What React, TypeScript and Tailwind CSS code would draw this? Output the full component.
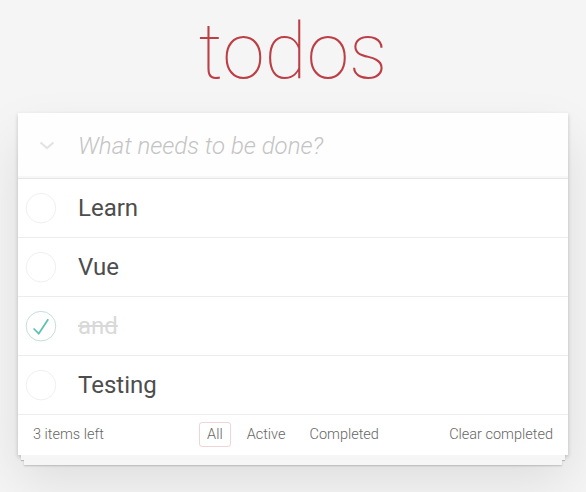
import React from "react";

type Todo = { id: number; title: string; done: boolean };

const todos: Todo[] = [
  { id: 1, title: "Learn", done: false },
  { id: 2, title: "Vue", done: false },
  { id: 3, title: "and", done: true },
  { id: 4, title: "Testing", done: false },
];

function Toggle({ done }: { done: boolean }) {
  return (
    <svg width="40" height="40" viewBox="-10 -18 100 135" className="shrink-0">
      <circle
        cx="50"
        cy="50"
        r="50"
        fill="none"
        stroke={done ? "#bddad5" : "#ededed"}
        strokeWidth="3"
      />
      {done && <path fill="#5dc2af" d="M72 25L42 71 27 56l-4 4 20 20 34-52z" />}
    </svg>
  );
}

export default function App() {
  const left = todos.filter((t) => !t.done).length;

  return (
    <div
      className="min-h-screen bg-[#f5f5f5] text-[#4d4d4d] font-light"
      style={{ fontFamily: "Roboto, 'Liberation Sans', sans-serif" }}
    >
      <div className="mx-auto max-w-[550px]">
        <header className="h-[113px] pt-[14px]">
          <h1 className="text-center text-[77px] leading-none font-thin text-[#bc3f46]">
            todos
          </h1>
        </header>

        <section className="bg-white shadow-[0_2px_4px_0_rgba(0,0,0,0.2),0_25px_50px_0_rgba(0,0,0,0.1)]">
          <div className="flex h-[65px] items-center bg-[rgba(0,0,0,0.003)] shadow-[inset_0_-2px_1px_rgba(0,0,0,0.03)]">
            <div className="flex w-[60px] justify-center pr-[2px]">
              <svg width="16" height="9" viewBox="0 0 16 9">
                <polyline
                  points="1.5,1.5 8,7 14.5,1.5"
                  fill="none"
                  stroke="#e3e3e3"
                  strokeWidth="2.2"
                />
              </svg>
            </div>
            <input
              className="flex-1 bg-transparent pr-4 text-[24px] outline-none placeholder:italic placeholder:text-[#c4c4c4]"
              placeholder="What needs to be done?"
            />
          </div>

          <ul className="border-t border-[#e6e6e6]">
            {todos.map((t) => (
              <li key={t.id} className="flex items-center border-b border-[#ededed]">
                <Toggle done={t.done} />
                <label
                  className={
                    "ml-5 block py-[15px] pr-[15px] text-[24px] leading-[28px] font-normal " +
                    (t.done ? "text-[#d9d9d9] line-through" : "text-[#4d4d4d]")
                  }
                >
                  {t.title}
                </label>
              </li>
            ))}
          </ul>

          <footer className="grid h-[40px] grid-cols-[1fr_auto_1fr] items-center px-[15px] text-[14.5px] text-[#666]">
            <span>{left} items left</span>
            <ul className="flex items-center">
              <li className="mx-[4px]">
                <a className="rounded-[3px] border border-[rgba(175,47,47,0.2)] px-[7px] py-[3px]">All</a>
              </li>
              <li className="mx-[4px]">
                <a className="border border-transparent px-[7px] py-[3px]">Active</a>
              </li>
              <li className="mx-[4px]">
                <a className="border border-transparent px-[7px] py-[3px]">Completed</a>
              </li>
            </ul>
            <span className="justify-self-end">Clear completed</span>
          </footer>
        </section>

        <div className="mx-[3px] h-[5px] bg-[#f6f6f6] shadow-[0_1px_1px_rgba(0,0,0,0.2)]" />
        <div className="mx-[6px] h-[5px] bg-[#f6f6f6] shadow-[0_1px_2px_rgba(0,0,0,0.2)]" />
      </div>
    </div>
  );
}
